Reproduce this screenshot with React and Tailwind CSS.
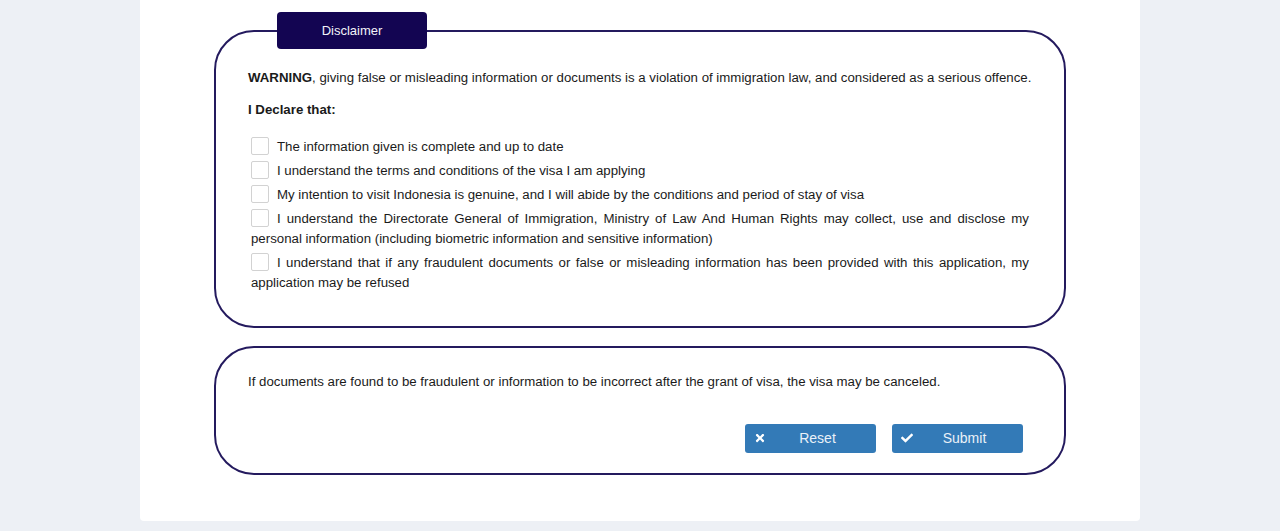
import React from "react";
import { FaTimes, FaCheck } from "react-icons/fa";

const items = [
  "The information given is complete and up to date",
  "I understand the terms and conditions of the visa I am applying",
  "My intention to visit Indonesia is genuine, and I will abide by the conditions and period of stay of visa",
  "I understand the Directorate General of Immigration, Ministry of Law And Human Rights may collect, use and disclose my personal information (including biometric information and sensitive information)",
  "I understand that if any fraudulent documents or false or misleading information has been provided with this application, my application may be refused",
];

export default function App() {
  return (
    <div
      className="min-h-[531px] w-full bg-[#edf0f5] text-[13.25px] text-[#1a1a1a]"
      style={{ fontFamily: '"Liberation Sans", Arial, sans-serif' }}
    >
      <div className="mx-auto w-[1000px] bg-white rounded-b-[4px] px-[74px] pt-[30px] pb-[46px]">
        <div className="relative border-2 border-[#241a5e] rounded-[40px] pl-[32px] pr-[35px] pt-[36px] pb-[33px]">
          <div className="absolute left-[61px] top-[-20px] w-[150px] h-[37px] bg-[#130552] rounded-[4px] flex items-center justify-center text-[#f2f2f8] text-[13px]">
            Disclaimer
          </div>
          <p className="leading-[20px] whitespace-nowrap">
            <b>WARNING</b>, giving false or misleading information or documents is a violation of immigration law, and considered as a serious offence.
          </p>
          <p className="leading-[20px] font-bold mt-[12px]">I Declare that:</p>
          <div className="mt-[17px] ml-[3px] flex flex-col gap-[4px]">
            {items.map((t, i) => (
              <div key={i} className="leading-[20px] text-justify">
                <span className="inline-block w-[18px] h-[18px] border border-[#d2d2d2] rounded-[2px] bg-white align-[-4px] mr-[8px]"></span>
                {t}
              </div>
            ))}
          </div>
        </div>

        <div className="mt-[18px] border-2 border-[#241a5e] rounded-[40px] pl-[32px] pr-[41px] pt-[24px] pb-[20px]">
          <p className="leading-[20px]">
            If documents are found to be fraudulent or information to be incorrect after the grant of visa, the visa may be canceled.
          </p>
          <div className="mt-[32px] flex justify-end gap-[16px]">
            <button className="relative w-[131px] h-[29px] bg-[#337ab7] rounded-[3px] text-[14px] text-[#eaf1f8] flex items-center justify-center pl-[14px]">
              <FaTimes className="absolute left-[9px] top-[8px] w-[12px] h-[12px] text-white" />
              Reset
            </button>
            <button className="relative w-[131px] h-[29px] bg-[#337ab7] rounded-[3px] text-[14px] text-[#eaf1f8] flex items-center justify-center pl-[14px]">
              <FaCheck className="absolute left-[9px] top-[8px] w-[12px] h-[12px] text-white" />
              Submit
            </button>
          </div>
        </div>
      </div>
    </div>
  );
}
